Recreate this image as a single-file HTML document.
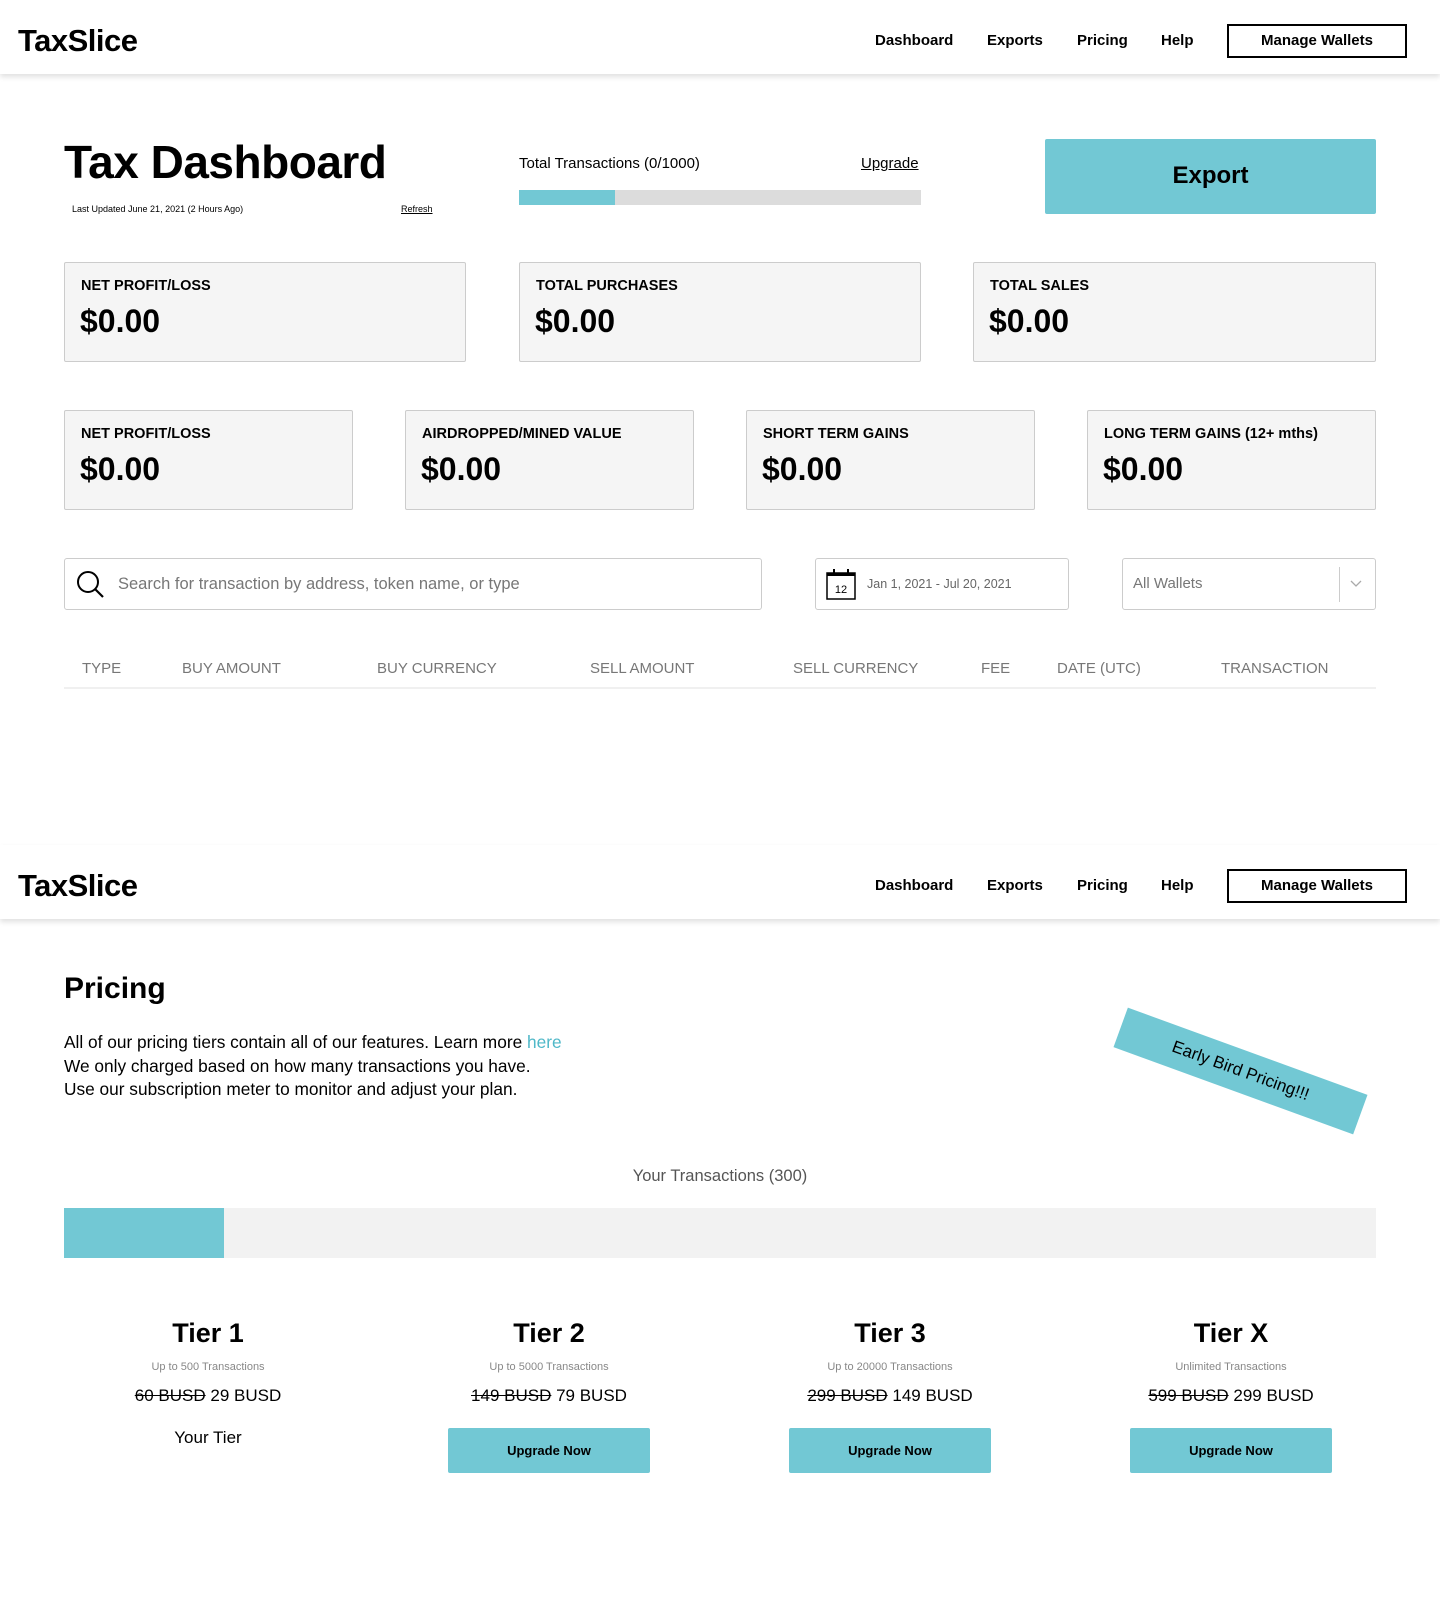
<!DOCTYPE html>
<html><head><meta charset="utf-8"><style>
*{box-sizing:border-box;margin:0;padding:0}
body{width:1440px;height:1598px;background:#fff;font-family:"Liberation Sans",sans-serif;color:#000;position:relative;overflow:hidden}
.a{position:absolute}
.hdr{position:absolute;left:0;width:1440px;height:74px;background:#fff;box-shadow:0 3px 5px rgba(0,0,0,.12)}
.logo{position:absolute;left:18px;top:23px;font-size:31px;font-weight:bold;letter-spacing:-.5px}
.nav{position:absolute;top:32px;font-size:15px;font-weight:bold}
.mw{position:absolute;left:1227px;top:24px;width:180px;height:34px;border:2px solid #000;font-size:15px;font-weight:bold;text-align:center;line-height:30px}
.card{position:absolute;background:#f5f5f5;border:1px solid #ccc;border-radius:2px}
.card .l{position:absolute;left:16px;top:15px;font-size:14.5px;font-weight:bold}
.card .v{position:absolute;left:15px;top:40px;font-size:32px;font-weight:bold}
.box{position:absolute;border:1px solid #ccc;border-radius:3px;background:#fff}
.th{position:absolute;top:660px;font-size:15px;color:#777}
.tier{position:absolute;width:260px;text-align:center}
.btn{position:absolute;width:202px;height:45px;background:#72c8d4;border-radius:2px;font-size:13px;font-weight:bold;text-align:center;line-height:45px}
</style></head><body>
<div class="hdr" style="top:0"></div>
<div class="logo">TaxSlice</div>
<div class="nav" style="left:875px">Dashboard</div>
<div class="nav" style="left:987px">Exports</div>
<div class="nav" style="left:1077px">Pricing</div>
<div class="nav" style="left:1161px">Help</div>
<div class="mw">Manage Wallets</div>

<div class="a" style="left:64px;top:135px;font-size:46px;font-weight:bold;letter-spacing:-.5px">Tax Dashboard</div>
<div class="a" style="left:72px;top:204px;font-size:9px">Last Updated June 21, 2021 (2 Hours Ago)</div>
<div class="a" style="left:401px;top:204px;font-size:9px;text-decoration:underline">Refresh</div>
<div class="a" style="left:519px;top:155px;font-size:15px">Total Transactions (0/1000)</div>
<div class="a" style="left:861px;top:155px;font-size:15px;text-decoration:underline">Upgrade</div>
<div class="a" style="left:519px;top:190px;width:402px;height:15px;background:#dcdcdc"></div>
<div class="a" style="left:519px;top:190px;width:96px;height:15px;background:#72c8d4"></div>
<div class="a" style="left:1045px;top:139px;width:331px;height:75px;background:#72c8d4;border-radius:2px;font-size:24px;font-weight:bold;text-align:center;line-height:73px">Export</div>

<div class="card" style="left:64px;top:262px;width:402px;height:100px"><div class="l">NET PROFIT/LOSS</div><div class="v">$0.00</div></div>
<div class="card" style="left:519px;top:262px;width:402px;height:100px"><div class="l">TOTAL PURCHASES</div><div class="v">$0.00</div></div>
<div class="card" style="left:973px;top:262px;width:403px;height:100px"><div class="l">TOTAL SALES</div><div class="v">$0.00</div></div>
<div class="card" style="left:64px;top:410px;width:289px;height:100px"><div class="l">NET PROFIT/LOSS</div><div class="v">$0.00</div></div>
<div class="card" style="left:405px;top:410px;width:289px;height:100px"><div class="l">AIRDROPPED/MINED VALUE</div><div class="v">$0.00</div></div>
<div class="card" style="left:746px;top:410px;width:289px;height:100px"><div class="l">SHORT TERM GAINS</div><div class="v">$0.00</div></div>
<div class="card" style="left:1087px;top:410px;width:289px;height:100px"><div class="l">LONG TERM GAINS (12+ mths)</div><div class="v">$0.00</div></div>

<div class="box" style="left:64px;top:558px;width:698px;height:52px">
<svg class="a" style="left:11px;top:11px" width="30" height="30" viewBox="0 0 30 30"><circle cx="12" cy="12" r="10" fill="none" stroke="#000" stroke-width="2"/><path d="M19 19L27 27" stroke="#000" stroke-width="2.2"/></svg>
<div class="a" style="left:53px;top:16px;font-size:16.5px;color:#777">Search for transaction by address, token name, or type</div></div>
<div class="box" style="left:815px;top:558px;width:254px;height:52px">
<svg class="a" style="left:10px;top:9px" width="30" height="32" viewBox="0 0 30 32"><rect x="1" y="5" width="28" height="26" fill="#fff" stroke="#000" stroke-width="1.5"/><rect x="1" y="5" width="28" height="3" fill="#000"/><path d="M8 1v7M22 1v7" stroke="#000" stroke-width="2"/><text x="15" y="25" font-size="11" text-anchor="middle" font-family="Liberation Sans">12</text></svg>
<div class="a" style="left:51px;top:18px;font-size:12.5px;color:#666">Jan 1, 2021 - Jul 20, 2021</div></div>
<div class="box" style="left:1122px;top:558px;width:254px;height:52px">
<div class="a" style="left:10px;top:16px;font-size:15px;color:#777">All Wallets</div>
<div class="a" style="left:216px;top:8px;width:1px;height:35px;background:#ccc"></div>
<svg class="a" style="left:227px;top:21px" width="12" height="8" viewBox="0 0 12 8"><path d="M1 1l5 5 5-5" fill="none" stroke="#aaa" stroke-width="1.3"/></svg></div>

<div class="th" style="left:82px">TYPE</div>
<div class="th" style="left:182px">BUY AMOUNT</div>
<div class="th" style="left:377px">BUY CURRENCY</div>
<div class="th" style="left:590px">SELL AMOUNT</div>
<div class="th" style="left:793px">SELL CURRENCY</div>
<div class="th" style="left:981px">FEE</div>
<div class="th" style="left:1057px">DATE (UTC)</div>
<div class="th" style="left:1221px">TRANSACTION</div>
<div class="a" style="left:64px;top:687px;width:1312px;height:2px;background:#f0f0f0"></div>

<div class="hdr" style="top:845px"></div>
<div class="logo" style="top:868px">TaxSlice</div>
<div class="nav" style="left:875px;top:877px">Dashboard</div>
<div class="nav" style="left:987px;top:877px">Exports</div>
<div class="nav" style="left:1077px;top:877px">Pricing</div>
<div class="nav" style="left:1161px;top:877px">Help</div>
<div class="mw" style="top:869px">Manage Wallets</div>

<div class="a" style="left:64px;top:972px;font-size:30px;font-weight:bold">Pricing</div>
<div class="a" style="left:64px;top:1031px;font-size:17.3px;line-height:23.5px">All of our pricing tiers contain all of our features. Learn more <span style="color:#4fb8c8">here</span><br>We only charged based on how many transactions you have.<br>Use our subscription meter to monitor and adjust your plan.</div>
<div class="a" style="left:1113px;top:1050px;width:255px;height:42px;background:#72c8d4;transform:rotate(20deg);font-size:17px;text-align:center;line-height:42px">Early Bird Pricing!!!</div>

<div class="a" style="left:0;width:1440px;top:1167px;text-align:center;font-size:16.5px;color:#555">Your Transactions (300)</div>
<div class="a" style="left:64px;top:1208px;width:1312px;height:50px;background:#f2f2f2"></div>
<div class="a" style="left:64px;top:1208px;width:160px;height:50px;background:#72c8d4"></div>

<div class="tier" style="left:78px;top:1318px"><div style="font-size:27px;font-weight:bold">Tier 1</div><div style="font-size:11px;color:#888;margin-top:12px">Up to 500 Transactions</div><div style="font-size:17px;margin-top:13px"><s>60 BUSD</s> 29 BUSD</div><div style="font-size:17px;margin-top:22px">Your Tier</div></div>
<div class="tier" style="left:419px;top:1318px"><div style="font-size:27px;font-weight:bold">Tier 2</div><div style="font-size:11px;color:#888;margin-top:12px">Up to 5000 Transactions</div><div style="font-size:17px;margin-top:13px"><s>149 BUSD</s> 79 BUSD</div></div>
<div class="tier" style="left:760px;top:1318px"><div style="font-size:27px;font-weight:bold">Tier 3</div><div style="font-size:11px;color:#888;margin-top:12px">Up to 20000 Transactions</div><div style="font-size:17px;margin-top:13px"><s>299 BUSD</s> 149 BUSD</div></div>
<div class="tier" style="left:1101px;top:1318px"><div style="font-size:27px;font-weight:bold">Tier X</div><div style="font-size:11px;color:#888;margin-top:12px">Unlimited Transactions</div><div style="font-size:17px;margin-top:13px"><s>599 BUSD</s> 299 BUSD</div></div>
<div class="btn" style="left:448px;top:1428px">Upgrade Now</div>
<div class="btn" style="left:789px;top:1428px">Upgrade Now</div>
<div class="btn" style="left:1130px;top:1428px">Upgrade Now</div>
</body></html>
